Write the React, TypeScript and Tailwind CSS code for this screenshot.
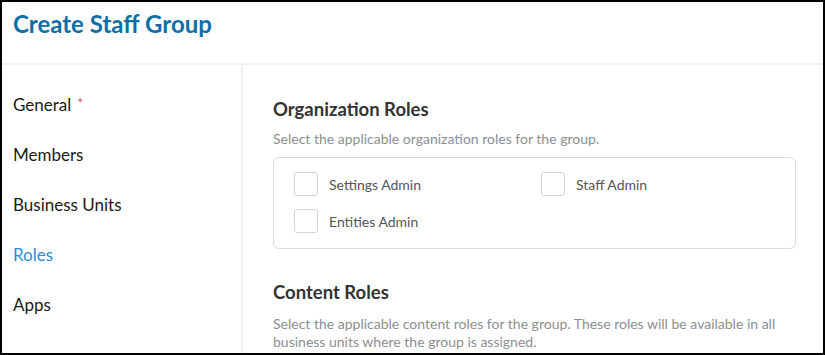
import { useState } from 'react';

const navItems = [
  { name: 'General', required: true },
  { name: 'Members' },
  { name: 'Business Units' },
  { name: 'Roles', active: true },
  { name: 'Apps' },
];

const orgRoles = ['Settings Admin', 'Staff Admin', 'Entities Admin'];

function Checkbox({ label }: { label: string }) {
  const [checked, setChecked] = useState(false);
  return (
    <label className="flex items-center gap-[11px] cursor-pointer">
      <span
        onClick={() => setChecked(!checked)}
        className={`w-[24px] h-[24px] rounded-[3px] border border-[#d4d4d4] flex-shrink-0 ${checked ? 'bg-[#0f6ea6]' : 'bg-white'}`}
      />
      <span className="text-[14px] text-[#555555]">{label}</span>
    </label>
  );
}

export default function App() {
  return (
    <div
      className="w-[825px] h-[355px] border-2 border-black bg-white flex flex-col overflow-hidden"
      style={{ fontFamily: 'Lato, "Open Sans", sans-serif' }}
    >
      {/* Header */}
      <div className="h-[63px] flex-shrink-0 border-b-2 border-[#f0f0f0] px-[11px] pt-[7px]">
        <h1 className="text-[24px] leading-[30px] font-bold text-[#0f6ea6]">Create Staff Group</h1>
      </div>

      <div className="flex flex-1 min-h-0">
        {/* Sidebar */}
        <nav className="w-[241px] flex-shrink-0 border-r-2 border-[#f0f0f0] pl-[11px] pt-[15px]">
          {navItems.map((item) => (
            <div
              key={item.name}
              className={`h-[50px] flex items-center text-[17px] ${item.active ? 'text-[#3189cf]' : 'text-[#1a1a1a]'}`}
            >
              {item.name}
              {item.required && <span className="ml-[6px] text-[#e0524f] text-[14px] -mt-[6px]">*</span>}
            </div>
          ))}
        </nav>

        {/* Content */}
        <div className="flex-1 pl-[30px] pr-[27px] pt-[32px]">
          <h2 className="text-[18.5px] leading-[24px] font-bold text-[#333333]">Organization Roles</h2>
          <p className="mt-[9px] text-[14px] leading-[18px] text-[#8a8f94]">
            Select the applicable organization roles for the group.
          </p>
          <div className="mt-[9px] h-[92px] border border-[#dcdcdc] rounded-[6px] px-[20px] pt-[14px] grid grid-cols-[247px_1fr] gap-y-[13px] content-start">
            {orgRoles.map((r) => (
              <Checkbox key={r} label={r} />
            ))}
          </div>

          <h2 className="mt-[31px] text-[18.5px] leading-[24px] font-bold text-[#333333]">Content Roles</h2>
          <p className="mt-[11px] text-[14px] leading-[18px] text-[#8a8f94] max-w-[530px]">
            Select the applicable content roles for the group. These roles will be available in all business units
            where the group is assigned.
          </p>
        </div>
      </div>
    </div>
  );
}
